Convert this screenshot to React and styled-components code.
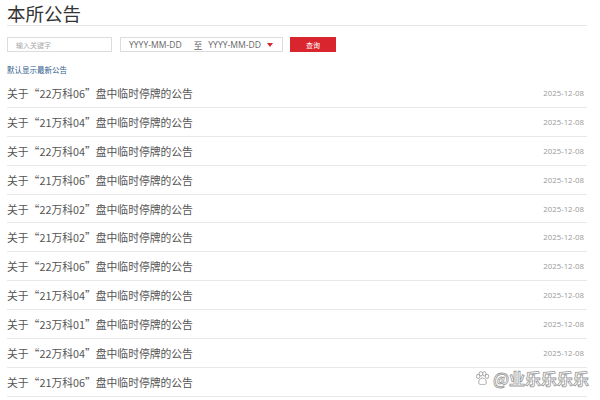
import React from 'react'
import styled, { createGlobalStyle } from 'styled-components'

const Global = createGlobalStyle`
body {
  margin: 0;
  background: #ffffff;
  font-family: "Noto Sans CJK SC", "Noto Sans", sans-serif;
}
`

const Page = styled.div`
position: relative;
width: 600px;
height: 400px;
overflow: hidden;
padding: 0 13px 0 7px;
box-sizing: border-box;
`

const Title = styled.h1`
margin: 0;
padding-top: 1px;
height: 24px;
font-size: 18.5px;
font-weight: 400;
line-height: 24px;
color: #333333;
border-bottom: 1px solid #e6e6e6;
`

const Toolbar = styled.div`
display: flex;
align-items: center;
margin-top: 11px;
height: 15px;
`

const Input = styled.div`
width: 105px;
height: 15px;
box-sizing: border-box;
border: 1px solid #dcdcdc;
font-size: 7px;
color: #aaaaaa;
padding-left: 8px;
display: flex;
align-items: center;
`

const DateBox = styled.div`
margin-left: 8px;
width: 163px;
height: 15px;
box-sizing: border-box;
border: 1px solid #dcdcdc;
display: flex;
align-items: center;
padding-left: 8px;
font-family: "Open Sans", "Noto Sans CJK SC", sans-serif;
font-size: 8.6px;
color: #666666;
`

const To = styled.span`
margin: 0 6px 0 12px;
font-family: "Noto Sans CJK SC", sans-serif;
`

const Caret = styled.span`
margin-left: 6px;
width: 0;
height: 0;
border-left: 3.5px solid transparent;
border-right: 3.5px solid transparent;
border-top: 4px solid #d9262e;
`

const Button = styled.button`
margin-left: 7px;
width: 46px;
height: 15px;
border: none;
background: #d9262e;
color: #ffffff;
font-family: "Noto Sans CJK SC", sans-serif;
font-size: 7px;
padding: 0;
`

const Hint = styled.div`
margin-top: 12px;
font-size: 7.5px;
line-height: 12px;
color: #2f5d8c;
`

const List = styled.ul`
list-style: none;
margin: 3px 0 0;
padding: 0;
`

const Row = styled.li`
height: 28.9px;
box-sizing: border-box;
border-bottom: 1px solid #e8e8e8;
display: flex;
align-items: center;
justify-content: space-between;
padding-right: 3px;
`

const Name = styled.span`
font-size: 10.8px;
color: #555555;
`

const Date = styled.span`
font-family: "Open Sans", sans-serif;
font-size: 7.8px;
color: #999999;
`

const Mark = styled.div`
position: absolute;
right: 11px;
bottom: 10px;
display: flex;
align-items: center;
gap: 3px;
font-size: 16px;
font-weight: 700;
color: #ffffff;
-webkit-text-stroke: 0.8px #9a9a9a;
`

const items = [
  '22万科06', '21万科04', '22万科04', '21万科06', '22万科02', '21万科02',
  '22万科06', '21万科04', '23万科01', '22万科04', '21万科06'
]

const Paw = () => (
  <svg width="15" height="15" viewBox="0 0 14 14" fill="#fff" stroke="#9a9a9a" strokeWidth="0.8">
    <ellipse cx="3" cy="5" rx="1.6" ry="2" />
    <ellipse cx="5.5" cy="2.6" rx="1.6" ry="2" />
    <ellipse cx="8.7" cy="2.6" rx="1.6" ry="2" />
    <ellipse cx="11.2" cy="5" rx="1.6" ry="2" />
    <path d="M7 6.5 C4.5 6.5 3 9.5 3.5 11.5 C4 13 6 12.5 7 12.5 C8 12.5 10 13 10.5 11.5 C11 9.5 9.5 6.5 7 6.5 Z" />
  </svg>
)

const App = () => {
  return (
    <Page>
      <Global />
      <Title>本所公告</Title>
      <Toolbar>
        <Input>输入关键字</Input>
        <DateBox>
          YYYY-MM-DD<To>至</To>YYYY-MM-DD<Caret />
        </DateBox>
        <Button>查询</Button>
      </Toolbar>
      <Hint>默认显示最新公告</Hint>
      <List>
        {items.map((code, i) => (
          <Row key={i}>
            <Name>关于“{code}”盘中临时停牌的公告</Name>
            {/* the watermark covers the last row's date */}
            {i < items.length - 1 && <Date>2025-12-08</Date>}
          </Row>
        ))}
      </List>
      <Mark>
        <Paw />
        <span>@业乐乐乐乐</span>
      </Mark>
    </Page>
  )
}

export default App
